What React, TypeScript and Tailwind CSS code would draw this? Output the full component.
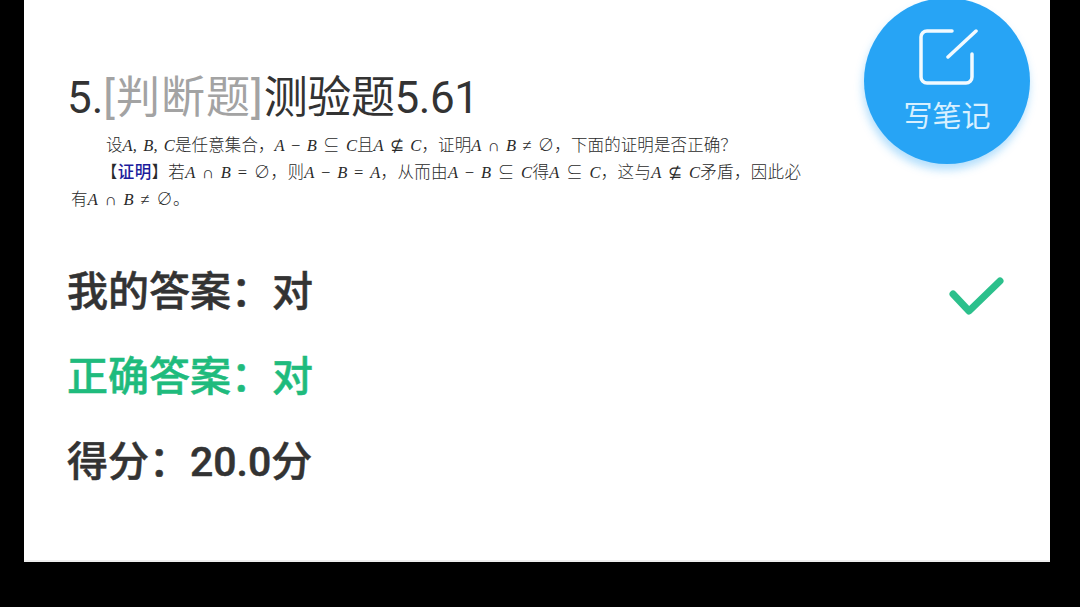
const cjk = "font-['Roboto','Noto_Sans_CJK_SC',sans-serif]";

function M({ children }: { children: React.ReactNode }) {
  return <span className="font-['Liberation_Serif','Noto_Sans_CJK_SC',serif] italic">{children}</span>;
}

function AnswerRow({ children, color }: { children: React.ReactNode; color: string }) {
  return (
    <div className="flex h-[85px] items-center justify-between">
      <p className={`text-[41px] leading-none font-medium [-webkit-text-stroke:0.5px_currentColor] ${color}`}>{children}</p>
    </div>
  );
}

function NoteButton() {
  return (
    <div className="absolute top-[-2px] left-[840px] flex h-[166px] w-[166px] flex-col items-center rounded-full bg-[#27a4f5] pt-[30px] shadow-[-1px_6px_9px_rgba(39,164,245,0.35)]">
      <svg width="62" height="60" viewBox="0 0 62 60" fill="none" stroke="#f2faff" strokeWidth="3.5" strokeLinecap="round">
        <path d="M36 3H11a6 6 0 0 0-6 6v40a6 6 0 0 0 6 6h39a6 6 0 0 0 6-6V26" />
        <path d="M32 29 L60 3" />
      </svg>
      <span className="mt-[11px] text-[29px] leading-[36px] font-normal text-[#d8f0ff]">写笔记</span>
    </div>
  );
}

export default function App() {
  return (
    <div className={`h-[607px] w-[1080px] overflow-hidden bg-black ${cjk}`}>
      <div className="relative ml-[24px] h-[562px] w-[1026px] border-b-2 border-[#eeeeee] bg-white pt-[71px] pl-[44px] text-[#333]">
        <h1 className="-ml-[1px] flex h-[54px] items-center text-[44px] leading-none font-normal">
          <span>5.</span>
          <span className="tracking-[1px] text-[#a3a3a3]">[判断题]</span>
          <span className="tracking-[-0.4px]">测验题5.61</span>
        </h1>

        <div className="mt-[7px] h-[81px] w-[760px] font-['Liberation_Serif','Noto_Sans_CJK_SC',serif] text-[16.5px] leading-[27px] font-light [word-spacing:2px] whitespace-nowrap text-[#2a2a2a]">
          <p className="pl-[38px] tracking-[0.1px]">
            设<M>A, B, C</M>是任意集合，<M>A</M> − <M>B</M> ⊆ <M>C</M>且<M>A</M> ⊈ <M>C</M>，证明<M>A</M> ∩ <M>B</M> ≠ ∅，下面的证明是否正确？
          </p>
          <p className="pl-[33px] tracking-[0.33px]">
            【<span className="font-medium text-[#1c1c9c]">证明</span>】若<M>A</M> ∩ <M>B</M> = ∅，则<M>A</M> − <M>B</M> = <M>A</M>，从而由<M>A</M> − <M>B</M> ⊆ <M>C</M>得<M>A</M> ⊆ <M>C</M>，这与<M>A</M> ⊈ <M>C</M>矛盾，因此必
          </p>
          <p className="pl-[3px] tracking-[0.33px]">
            有<M>A</M> ∩ <M>B</M> ≠ ∅。
          </p>
        </div>

        <div className="mt-[37px] -ml-[1px]">
          <div className="relative">
            <AnswerRow color="text-[#333]">我的答案：对</AnswerRow>
            <svg className="absolute top-[27px] left-[880px]" width="58" height="44" viewBox="0 0 58 44" fill="none" stroke="#2cc08c" strokeWidth="7" strokeLinecap="round" strokeLinejoin="round">
              <path d="M6 17 L22 34 L53 4" />
            </svg>
          </div>
          <AnswerRow color="text-[#1fbb7d]">正确答案：对</AnswerRow>
          <AnswerRow color="text-[#333]">得分：20.0分</AnswerRow>
        </div>

        <NoteButton />
      </div>
    </div>
  );
}
